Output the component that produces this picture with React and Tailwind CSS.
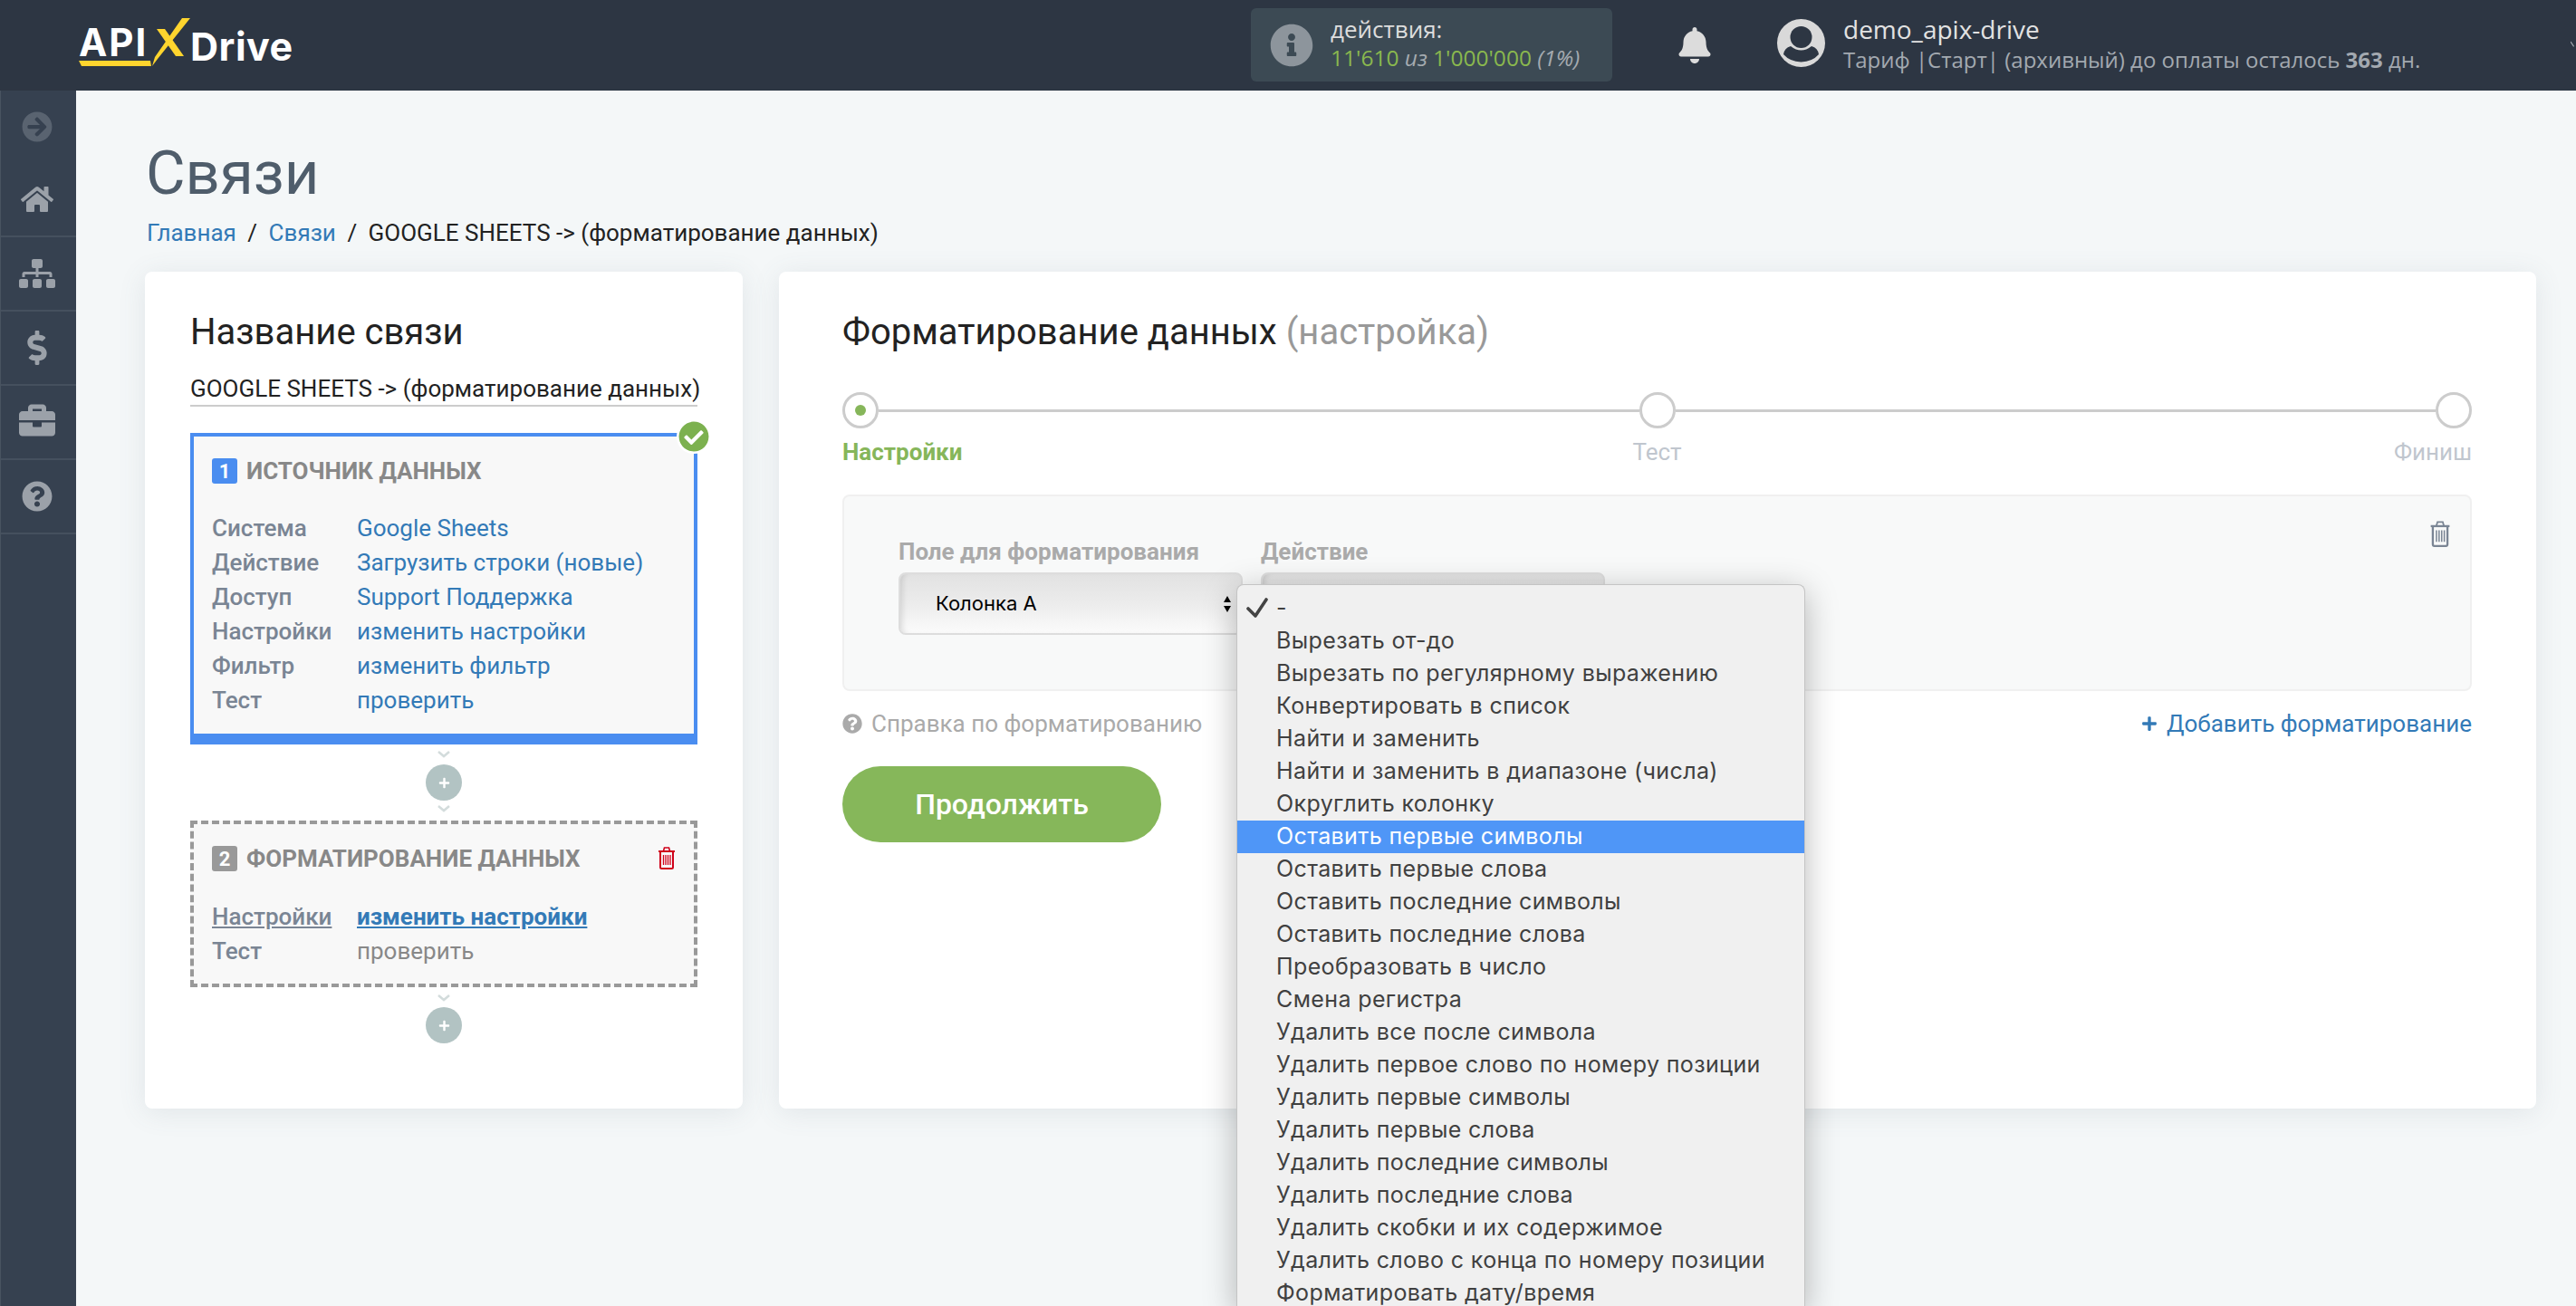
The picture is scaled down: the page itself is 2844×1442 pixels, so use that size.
import { FaArrowCircleRight, FaHome, FaSitemap, FaDollarSign, FaBriefcase, FaQuestionCircle, FaInfoCircle, FaBell, FaPlus, FaCheckCircle } from 'react-icons/fa'

const sideItems = [
  { icon: FaHome, size: 'w-[36px] h-[36px]' },
  { icon: FaSitemap, size: 'w-[40px] h-[40px]' },
  { icon: FaDollarSign, size: 'w-[38px] h-[38px]' },
  { icon: FaBriefcase, size: 'w-[40px] h-[40px] mb-[4px]' },
  { icon: FaQuestionCircle, size: 'w-[34px] h-[34px]' },
]

const sourceRows = [
  ['Система', 'Google Sheets'],
  ['Действие', 'Загрузить строки (новые)'],
  ['Доступ', 'Support Поддержка'],
  ['Настройки', 'изменить настройки'],
  ['Фильтр', 'изменить фильтр'],
  ['Тест', 'проверить'],
]

const menuItems = [
  '-',
  'Вырезать от-до',
  'Вырезать по регулярному выражению',
  'Конвертировать в список',
  'Найти и заменить',
  'Найти и заменить в диапазоне (числа)',
  'Округлить колонку',
  'Оставить первые символы',
  'Оставить первые слова',
  'Оставить последние символы',
  'Оставить последние слова',
  'Преобразовать в число',
  'Смена регистра',
  'Удалить все после символа',
  'Удалить первое слово по номеру позиции',
  'Удалить первые символы',
  'Удалить первые слова',
  'Удалить последние символы',
  'Удалить последние слова',
  'Удалить скобки и их содержимое',
  'Удалить слово с конца по номеру позиции',
  'Форматировать дату/время',
]

function Trash({ className }) {
  return (
    <svg viewBox="0 0 20 26" className={className} fill="none" stroke="currentColor">
      <path d="M1 6h18" strokeWidth="2" />
      <path d="M6.500 5.500l1-3.500h5l1 3.500" strokeWidth="1.600" />
      <path d="M3 6v17.500q0 1.500 1.500 1.500h11q1.500 0 1.500-1.500V6" strokeWidth="2" />
      <path d="M6.500 10v11M9 10v11M11.500 10v11M14 10v11" strokeWidth="1.300" />
    </svg>
  )
}

function Chevron() {
  return (
    <svg viewBox="0 0 14 8" className="w-[14px] h-2 text-[#d3dcdc]" fill="none" stroke="currentColor" strokeWidth="2.500">
      <path d="M1 1l6 5 6-5" />
    </svg>
  )
}

function PlusCircle() {
  return (
    <div className="w-10 h-10 rounded-full bg-[#b2c3c3] flex items-center justify-center text-white">
      <FaPlus className="w-[13px] h-[13px]" />
    </div>
  )
}

function UserIcon() {
  return (
    <svg viewBox="12 10 56 56" className="w-[56px] h-[56px]">
      <circle cx="39.500" cy="37.500" r="26.500" fill="#d9d9d9" />
      <circle cx="39.500" cy="31" r="12" fill="#2d3643" />
      <path d="M20 50Q21 43 28 41Q39.500 50 51 41Q58 43 59 50Q52 58 39.500 58.500Q27 58 20 50Z" fill="#2d3643" />
    </svg>
  )
}

function Logo() {
  return (
    <div className="relative flex items-center w-[239px] h-[53px] font-['Inter',sans-serif] font-bold text-[42px] leading-none text-white">
      <span className="mt-[1px] tracking-[2px]">API</span>
      <span className="absolute left-[123px] top-[10px] text-[43px] tracking-[0.500px]">Drive</span>
      <svg viewBox="0 0 239 53" className="absolute left-0 top-0 w-[239px] h-[53px] text-[#ffd52e]" fill="currentColor">
        <path d="M114 0h9L87 45l-6 8 3-10z" />
        <path d="M86 12h9l21 30h-9z" />
        <path d="M0 47h79l1 6H3z" />
      </svg>
    </div>
  )
}

function Header() {
  return (
    <header className="relative h-[100px] shrink-0 bg-[#2d3643] flex items-center font-['Open_Sans',sans-serif]">
      <div className="ml-[87px] mb-[7px]">
        <Logo />
      </div>
      <div className="ml-[1055px] w-[399px] h-[81px] mb-[1px] rounded-md bg-[#3c4a54] flex items-center">
        <FaInfoCircle className="ml-[21px] w-[48px] h-[48px] text-[#8d959c]" />
        <div className="ml-[19px] mb-[3px]">
          <div className="text-[26px] leading-[32px] text-[#dddddd]">действия:</div>
          <div className="text-[24.500px] leading-[32px] text-[#a5abb0] italic">
            <span className="not-italic text-[#8ab84e]">11'610</span> из <span className="not-italic text-[#8ab84e]">1'000'000</span> (1%)
          </div>
        </div>
      </div>
      <FaBell className="ml-[71px] w-[40px] h-[40px] text-[#dcdcdc]" />
      <div className="ml-[70px] mb-[5px]">
        <UserIcon />
      </div>
      <div className="ml-[18px] mb-[5px]">
        <div className="text-[28px] leading-[36px] text-[#e2e2e2]">demo_apix-drive</div>
        <div className="text-[24px] leading-[32px] text-[#a3a9b0]">
          Тариф |Старт| (архивный) до оплаты осталось <b>363</b> дн.
        </div>
      </div>
      <svg viewBox="0 0 10 12" className="absolute right-0 top-[42px] w-[6px] h-[14px] text-[#a3a9b0]" fill="none" stroke="currentColor" strokeWidth="2">
        <path d="M0 1l6 9" />
      </svg>
    </header>
  )
}

function Sidebar() {
  return (
    <aside className="w-[84px] shrink-0 bg-[#364150] border-l-[1px] border-[#485360]">
      <div className="h-[80px] flex items-center justify-center pr-[3px]">
        <FaArrowCircleRight className="w-[34px] h-[34px] text-[#596370]" />
      </div>
      {sideItems.map((item, i) => {
        const Icon = item.icon
        return (
          <div key={i} className="h-[82px] flex items-center justify-center pr-[3px] border-b-[2px] border-[#45505e] text-[#9ba1a9]">
            <Icon className={item.size} />
          </div>
        )
      })}
    </aside>
  )
}

function SourceBox() {
  return (
    <div className="relative h-[344px] bg-[#f8f8f8] border-[4px] border-b-[12px] border-[#4a8df0] pl-[20px] pt-[24px]">
      <div className="flex items-center h-7 font-bold text-[26px] text-[#888888]">
        <span className="w-7 h-7 rounded-[3px] bg-[#4a8df0] text-white text-[22px] flex items-center justify-center">1</span>
        <span className="ml-[10px]">ИСТОЧНИК ДАННЫХ</span>
      </div>
      <div className="mt-[30px] text-[26px] leading-[38px]">
        {sourceRows.map(([label, value]) => (
          <div key={label} className="flex">
            <span className="w-[160px] text-[#7a8594] font-medium">{label}</span>
            <span className="text-[#337ab7]">{value}</span>
          </div>
        ))}
      </div>
      <FaCheckCircle className="absolute -right-[19px] -top-[19px] w-[38px] h-[38px] text-[#7cb14f] bg-white rounded-full border-[2px] border-white" />
    </div>
  )
}

function FormatBox() {
  return (
    <div className="relative h-[184px] bg-[#f8f8f8] border-[4px] border-dashed border-[#999999] pl-[20px] pt-[24px]">
      <div className="flex items-center h-7 font-bold text-[26px] text-[#888888]">
        <span className="w-7 h-7 rounded-[3px] bg-[#999999] text-white text-[22px] flex items-center justify-center">2</span>
        <span className="ml-[10px]">ФОРМАТИРОВАНИЕ ДАННЫХ</span>
      </div>
      <div className="mt-[31px] text-[26px] leading-[38px]">
        <div className="flex">
          <span className="w-[160px] text-[#7a8594] font-medium underline">Настройки</span>
          <span className="text-[#337ab7] font-bold underline">изменить настройки</span>
        </div>
        <div className="flex">
          <span className="w-[160px] text-[#7a8594] font-medium">Тест</span>
          <span className="text-[#888888]">проверить</span>
        </div>
      </div>
      <Trash className="absolute right-[20px] top-[24px] w-[20px] h-[26px] text-[#d0021b]" />
    </div>
  )
}

function LeftCard() {
  return (
    <section className="w-[660px] h-[924px] bg-white rounded-lg shadow-[0_4px_30px_rgba(90,110,120,0.12)] px-[50px] pt-[46px]">
      <h2 className="text-[40px] leading-[42px] text-[#222222]">Название связи</h2>
      <div className="mt-[23px] h-[38px] border-b-[2px] border-[#cccccc] text-[26px] leading-[36px] text-[#222222] whitespace-nowrap">
        GOOGLE SHEETS -&gt; (форматирование данных)
      </div>
      <div className="mt-[29px]">
        <SourceBox />
      </div>
      <div className="h-[84px] flex flex-col items-center">
        <div className="mt-[7px] mb-[7px]"><Chevron /></div>
        <PlusCircle />
        <div className="mt-[5px]"><Chevron /></div>
      </div>
      <FormatBox />
      <div className="flex flex-col items-center">
        <div className="mt-[8px] mb-[6px]"><Chevron /></div>
        <PlusCircle />
      </div>
    </section>
  )
}

function Steps() {
  return (
    <>
      <div className="mt-[41px] flex items-center">
        <div className="w-10 h-10 rounded-full border-[3px] border-[#cccccc] bg-white flex items-center justify-center">
          <div className="w-[12px] h-[12px] rounded-full bg-[#86b65a]" />
        </div>
        <div className="flex-1 h-[3px] bg-[#cccccc]" />
        <div className="w-10 h-10 rounded-full border-[3px] border-[#cccccc] bg-white" />
        <div className="flex-1 h-[3px] bg-[#cccccc]" />
        <div className="w-10 h-10 rounded-full border-[3px] border-[#cccccc] bg-white" />
      </div>
      <div className="mt-[11px] grid grid-cols-3 text-[26px] leading-[30px] text-[#c0c6ce]">
        <span className="font-bold text-[#86b65a]">Настройки</span>
        <span className="text-center">Тест</span>
        <span className="text-right">Финиш</span>
      </div>
    </>
  )
}

function Select({ children }) {
  return (
    <div className="w-[380px] h-[69px] rounded-lg border-[2px] border-[#dddddd] bg-gradient-to-b from-[#e2e2e2] via-[#ececec] to-[#fbfbfb] shadow-[inset_6px_0_6px_-4px_rgba(0,0,0,0.12)] flex items-center">
      {children}
    </div>
  )
}

function RightCard() {
  return (
    <section className="w-[1940px] h-[924px] bg-white rounded-lg shadow-[0_4px_30px_rgba(90,110,120,0.12)] pl-[70px] pr-[71px] pt-[42px]">
      <h2 className="text-[40px] leading-[50px] text-[#222222]">
        Форматирование данных <span className="text-[#999999]">(настройка)</span>
      </h2>
      <Steps />
      <div className="relative mt-[32px] h-[217px] rounded-lg border-[2px] border-[#f0f0f0] bg-[#f8f9f9] pl-[60px] pt-[46px]">
        <div className="flex gap-[20px] text-[26px] leading-[30px] font-bold text-[#aaaaaa]">
          <span className="w-[380px]">Поле для форматирования</span>
          <span>Действие</span>
        </div>
        <div className="mt-[8px] flex gap-[20px]">
          <Select>
            <span className="ml-[39px] text-[22px] text-black font-['Inter',sans-serif]">Колонка А</span>
            <svg viewBox="0 0 10 20" className="ml-auto mr-[10px] w-[10px] h-[20px] text-black" fill="currentColor">
              <path d="M5 1l4 7H1zM5 19l-4-7h8z" />
            </svg>
          </Select>
          <Select />
        </div>
        <Trash className="absolute right-[20px] top-[26px] w-[26px] h-[30px] text-[#7a8594]" />
      </div>
      <div className="mt-[18px] h-[36px] flex items-center justify-between text-[26px]">
        <div className="flex items-center text-[#aaaaaa]">
          <FaQuestionCircle className="w-[22px] h-[22px] mr-[10px]" />
          Справка по форматированию
        </div>
        <div className="flex items-center text-[#337ab7]">
          <FaPlus className="w-[18px] h-[18px] mr-[10px]" />
          Добавить форматирование
        </div>
      </div>
      <button className="mt-[29px] w-[352px] h-[84px] rounded-full bg-[#86b75a] text-white text-[32px] font-medium">
        Продолжить
      </button>
    </section>
  )
}

function OptionsMenu() {
  return (
    <div className="absolute left-[1365px] top-[645px] w-[628px] h-[800px] overflow-hidden rounded-t-lg bg-[#f0f0f0] border-[1px] border-[#c4c4c4] border-b-0 pt-[8px] shadow-[0_8px_36px_rgba(0,0,0,0.28)] font-['Inter',sans-serif] text-[25px] tracking-[0.380px] text-[#404040]">
      {menuItems.map((item, i) => (
        <div key={item} className={'relative h-9 flex items-center pl-[43px] ' + (i === 7 ? 'bg-[#4f96f7] text-white' : '')}>
          {i === 0 && (
            <svg viewBox="0 0 24 22" className="absolute left-[10px] top-[6px] w-6 h-[22px]" fill="none" stroke="#444444" strokeWidth="3.600" strokeLinecap="round" strokeLinejoin="round">
              <path d="M2 12l8 8L22 2" />
            </svg>
          )}
          {item}
        </div>
      ))}
    </div>
  )
}

export default function App() {
  return (
    <div className="relative w-[2844px] h-[1442px] overflow-hidden flex flex-col bg-[#f4f7f8] font-['Roboto',sans-serif]">
      <Header />
      <div className="flex flex-1 min-h-0">
        <Sidebar />
        <main className="flex-1 pl-[76px]">
          <div className="pl-[1px] pt-[56px]">
            <h1 className="text-[67px] leading-[70px] text-[#4f5d6b]">Связи</h1>
            <div className="pl-[1px] mt-[11px] text-[26px] leading-[40px] text-[#222222]">
              <span className="text-[#337ab7]">Главная</span>
              <span className="mx-[12.500px]">/</span>
              <span className="text-[#337ab7]">Связи</span>
              <span className="mx-[12.500px]">/</span>
              GOOGLE SHEETS -&gt; (форматирование данных)
            </div>
          </div>
          <div className="mt-[23px] flex gap-[40px]">
            <LeftCard />
            <RightCard />
          </div>
        </main>
      </div>
      <OptionsMenu />
    </div>
  )
}
